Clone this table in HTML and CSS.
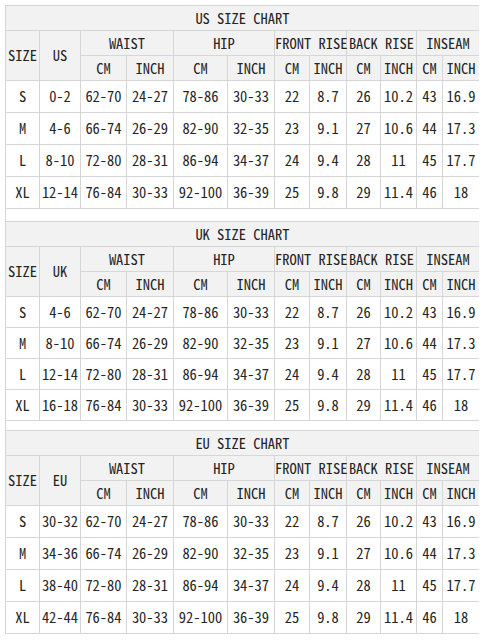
FILE: index.html
```html
<!DOCTYPE html>
<html>
<head>
<meta charset="utf-8">
<link rel="stylesheet" href="styles.css">
</head>
<body>
<table class="chart">
  <colgroup>
    <col class="c-size"><col class="c-region">
    <col class="c-wcm"><col class="c-win">
    <col class="c-hcm"><col class="c-hin">
    <col class="c-fcm"><col class="c-fin">
    <col class="c-bcm"><col class="c-bin">
    <col class="c-icm"><col class="c-iin">
  </colgroup>
  <tbody>
    <tr class="title"><td colspan="12">US SIZE CHART</td></tr>
    <tr class="head"><td rowspan="2">SIZE</td><td rowspan="2">US</td><td colspan="2">WAIST</td><td colspan="2">HIP</td><td colspan="2">FRONT RISE</td><td colspan="2">BACK RISE</td><td colspan="2">INSEAM</td></tr>
    <tr class="head"><td>CM</td><td>INCH</td><td>CM</td><td>INCH</td><td>CM</td><td>INCH</td><td>CM</td><td>INCH</td><td>CM</td><td>INCH</td></tr>
    <tr class="row"><td>S</td><td>0-2</td><td>62-70</td><td>24-27</td><td>78-86</td><td>30-33</td><td>22</td><td>8.7</td><td>26</td><td>10.2</td><td>43</td><td>16.9</td></tr>
    <tr class="row"><td>M</td><td>4-6</td><td>66-74</td><td>26-29</td><td>82-90</td><td>32-35</td><td>23</td><td>9.1</td><td>27</td><td>10.6</td><td>44</td><td>17.3</td></tr>
    <tr class="row"><td>L</td><td>8-10</td><td>72-80</td><td>28-31</td><td>86-94</td><td>34-37</td><td>24</td><td>9.4</td><td>28</td><td>11</td><td>45</td><td>17.7</td></tr>
    <tr class="row"><td>XL</td><td>12-14</td><td>76-84</td><td>30-33</td><td>92-100</td><td>36-39</td><td>25</td><td>9.8</td><td>29</td><td>11.4</td><td>46</td><td>18</td></tr>
    <tr class="gap gap-first"><td colspan="12"></td></tr>
  </tbody>
  <tbody class="compact">
    <tr class="title"><td colspan="12">UK SIZE CHART</td></tr>
    <tr class="head"><td rowspan="2">SIZE</td><td rowspan="2">UK</td><td colspan="2">WAIST</td><td colspan="2">HIP</td><td colspan="2">FRONT RISE</td><td colspan="2">BACK RISE</td><td colspan="2">INSEAM</td></tr>
    <tr class="head"><td>CM</td><td>INCH</td><td>CM</td><td>INCH</td><td>CM</td><td>INCH</td><td>CM</td><td>INCH</td><td>CM</td><td>INCH</td></tr>
    <tr class="row"><td>S</td><td>4-6</td><td>62-70</td><td>24-27</td><td>78-86</td><td>30-33</td><td>22</td><td>8.7</td><td>26</td><td>10.2</td><td>43</td><td>16.9</td></tr>
    <tr class="row"><td>M</td><td>8-10</td><td>66-74</td><td>26-29</td><td>82-90</td><td>32-35</td><td>23</td><td>9.1</td><td>27</td><td>10.6</td><td>44</td><td>17.3</td></tr>
    <tr class="row"><td>L</td><td>12-14</td><td>72-80</td><td>28-31</td><td>86-94</td><td>34-37</td><td>24</td><td>9.4</td><td>28</td><td>11</td><td>45</td><td>17.7</td></tr>
    <tr class="row"><td>XL</td><td>16-18</td><td>76-84</td><td>30-33</td><td>92-100</td><td>36-39</td><td>25</td><td>9.8</td><td>29</td><td>11.4</td><td>46</td><td>18</td></tr>
    <tr class="gap"><td colspan="12"></td></tr>
  </tbody>
  <tbody>
    <tr class="title"><td colspan="12">EU SIZE CHART</td></tr>
    <tr class="head"><td rowspan="2">SIZE</td><td rowspan="2">EU</td><td colspan="2">WAIST</td><td colspan="2">HIP</td><td colspan="2">FRONT RISE</td><td colspan="2">BACK RISE</td><td colspan="2">INSEAM</td></tr>
    <tr class="head"><td>CM</td><td>INCH</td><td>CM</td><td>INCH</td><td>CM</td><td>INCH</td><td>CM</td><td>INCH</td><td>CM</td><td>INCH</td></tr>
    <tr class="row"><td>S</td><td>30-32</td><td>62-70</td><td>24-27</td><td>78-86</td><td>30-33</td><td>22</td><td>8.7</td><td>26</td><td>10.2</td><td>43</td><td>16.9</td></tr>
    <tr class="row"><td>M</td><td>34-36</td><td>66-74</td><td>26-29</td><td>82-90</td><td>32-35</td><td>23</td><td>9.1</td><td>27</td><td>10.6</td><td>44</td><td>17.3</td></tr>
    <tr class="row"><td>L</td><td>38-40</td><td>72-80</td><td>28-31</td><td>86-94</td><td>34-37</td><td>24</td><td>9.4</td><td>28</td><td>11</td><td>45</td><td>17.7</td></tr>
    <tr class="row"><td>XL</td><td>42-44</td><td>76-84</td><td>30-33</td><td>92-100</td><td>36-39</td><td>25</td><td>9.8</td><td>29</td><td>11.4</td><td>46</td><td>18</td></tr>
  </tbody>
</table>
</body>
</html>
```

FILE: styles.css
```css
html, body {
  background: #ffffff;
}
body {
  margin: 5px;
}
.chart {
  border-collapse: collapse;
  table-layout: fixed;
  width: 474px;
  font-family: "Noto Sans Mono CJK SC", "Liberation Mono", monospace;
  font-size: 14.5px;
  color: #252525;
}
.c-size { width: 34px; }
.c-region { width: 41px; }
.c-wcm { width: 46px; }
.c-win { width: 47px; }
.c-hcm { width: 54px; }
.c-hin { width: 47px; }
.c-fcm { width: 35px; }
.c-fin { width: 37px; }
.c-bcm { width: 34px; }
.c-bin { width: 36px; }
.c-icm { width: 26px; }
.c-iin { width: 37px; }
.chart td {
  border: 1px solid #d6d6d6;
  padding: 0;
  text-align: center;
  white-space: nowrap;
  overflow: visible;
  line-height: 1;
}
.title td {
  height: 24px;
  background: #f2f2f2;
}
.head td {
  height: 24px;
  background: #f2f2f2;
}
.row td {
  height: 31px;
  background: #fff;
}
.compact .row td {
  height: 30px;
}
.gap td {
  height: 9px;
  background: #fff;
}
.gap-first td {
  height: 12px;
}
```
